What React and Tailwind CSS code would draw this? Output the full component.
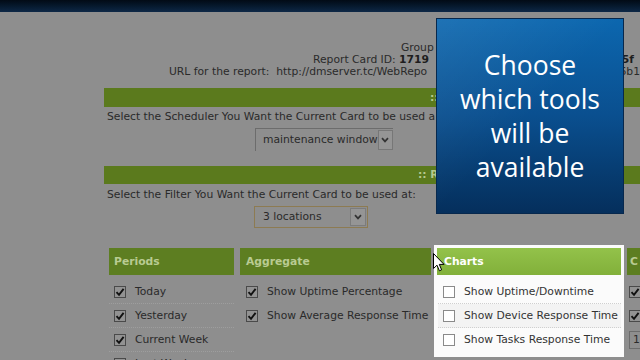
import React from "react";

function Check({ checked }) {
  if (checked) {
    return (
      <div className="w-[12px] h-[12px] shrink-0 border border-[#4a4a4a] bg-[#929292] flex items-center justify-center">
        <svg width="10" height="10" viewBox="0 0 10 10">
          <path d="M1.5 5.2 L4 7.8 L8.6 1.8" fill="none" stroke="#111" strokeWidth="1.9" />
        </svg>
      </div>
    );
  }
  return <div className="w-[12px] h-[12px] shrink-0 border border-[#8a8a8a] bg-white" />;
}

function Row({ checked, label, light, last, alt }) {
  return (
    <div
      className={
        "h-[24px] flex items-center gap-[9px] pl-[5px] whitespace-nowrap " +
        (last ? "" : light ? "border-b border-dotted border-[#cfcfcf] " : "border-b border-dotted border-[#9e9e9e] ") +
        (alt ? "bg-[#f3f3f3]" : "")
      }
    >
      <Check checked={checked} />
      <span>{label}</span>
    </div>
  );
}

function Chevron() {
  return (
    <svg width="8" height="6" viewBox="0 0 8 6">
      <path d="M1 1.2 L4 4.4 L7 1.2" fill="none" stroke="#333" strokeWidth="1.7" />
    </svg>
  );
}

export default function App() {
  return (
    <div className="relative w-[640px] h-[360px] overflow-hidden bg-[#8e8e8e] text-[#2a2a2a] font-['DejaVu_Sans',sans-serif]">
      <div className="h-[12px] bg-gradient-to-b from-[#020b16] to-[#0e2847]" />

      <div className="ml-[104px] w-[600px] text-[10.75px] leading-[12px]">
        <div className="h-[30px]" />
        <div className="pl-[297px] whitespace-nowrap">Group Name</div>
        <div className="flex w-[530px] whitespace-nowrap">
          <span className="pl-[209px]">
            Report Card ID: <b className="font-bold text-[#1e1e1e]">1719</b>
          </span>
          <span className="ml-auto font-bold text-[#1e1e1e]">5f</span>
        </div>
        <div className="flex w-[536px] whitespace-nowrap overflow-hidden">
          <span className="pl-[65px]">URL for the report:&nbsp; http://dmserver.tc/WebRepo</span>
          <span className="ml-auto">6b1</span>
        </div>

        <div className="mt-[10px] h-[19px] bg-[#5b7a1d] flex items-center pl-[326px] text-[#b6c88e] font-bold">
          ::
        </div>
        <div className="mt-[4px] pl-[3px] whitespace-nowrap">
          Select the Scheduler You Want the Current Card to be used a
        </div>
        <div className="mt-[5px] ml-[151px] w-[138px] h-[23px] flex border-l border-t border-[#6c6c6c] whitespace-nowrap">
          <div className="flex-1 flex items-center pl-[7px] text-[#2a2a2a]">maintenance window</div>
          <div className="w-[15px] shrink-0 my-[1px] mr-[1px] border border-[#777] bg-[#959595] flex items-center justify-center">
            <Chevron />
          </div>
        </div>

        <div className="mt-[15px] h-[18px] bg-[#5b7a1d] flex items-center pl-[314px] text-[#b6c88e] font-bold whitespace-nowrap">
          :: R
        </div>
        <div className="mt-[5px] pl-[3px] whitespace-nowrap">
          Select the Filter You Want the Current Card to be used at:
        </div>
        <div className="mt-[5px] ml-[150px] w-[114px] h-[22px] flex border border-[#8d7b52] whitespace-nowrap">
          <div className="flex-1 flex items-center pl-[8px] text-[#2a2a2a]">3 locations</div>
          <div className="w-[16px] shrink-0 my-[1px] mr-[1px] border border-[#7c7c7c] bg-[#959595] flex items-center justify-center">
            <Chevron />
          </div>
        </div>

        <div className="mt-[17px] ml-[2px] flex items-start">
          <div className="w-[131px] shrink-0 px-[3px] pt-[3px]">
            <div className="h-[27px] bg-[#5d7e21] flex items-center pl-[5px] font-bold text-[#b9cb92]">Periods</div>
            <div className="mt-[5px]">
              <Row checked label="Today" />
              <Row checked label="Yesterday" />
              <Row checked label="Current Week" />
              <Row checked label="Last Week" last />
            </div>
          </div>
          <div className="w-[197px] shrink-0 px-[3px] pt-[3px]">
            <div className="h-[27px] bg-[#5d7e21] flex items-center pl-[6px] font-bold text-[#b9cb92]">Aggregate</div>
            <div className="mt-[5px]">
              <div className="pl-[1px]">
                <Row checked label="Show Uptime Percentage" last />
              </div>
              <div className="pl-[1px]">
                <Row checked label="Show Average Response Time" last />
              </div>
            </div>
          </div>
          <div className="w-[190px] shrink-0 px-[3px] pt-[3px] pb-[5px] bg-[#fbfbfb] text-[#333]">
            <div className="h-[27px] bg-gradient-to-b from-[#93c24a] to-[#82b03a] flex items-center pl-[7px] font-bold text-white">
              Charts
            </div>
            <div className="mt-[5px] pl-[1px]">
              <Row label="Show Uptime/Downtime" light />
              <Row label="Show Device Response Time" light alt />
              <Row label="Show Tasks Response Time" last />
            </div>
          </div>
          <div className="w-[60px] shrink-0 px-[3px] pt-[3px] overflow-hidden">
            <div className="h-[27px] bg-[#5d7e21] flex items-center pl-[3px] font-bold text-[#b9cb92]">C</div>
            <div className="mt-[5px]">
              <div className="h-[24px] flex items-center pl-[2px]"><Check checked /></div>
              <div className="h-[24px] flex items-center pl-[2px]"><Check checked /></div>
              <div className="h-[24px] flex items-center pl-[2px]">
                <div className="w-[30px] h-[18px] border border-[#6c6c6c] pl-[3px] flex items-center">1</div>
              </div>
            </div>
          </div>
        </div>
      </div>

      <div className="absolute left-[436px] top-[18px] w-[188px] h-[196px] border border-[#07284d] bg-gradient-to-b from-[#0c67af] via-[#0a4f8f] to-[#052f5c] overflow-hidden flex items-center justify-center">
        <div className="absolute inset-0 bg-gradient-to-br from-[#ffffff14] via-transparent to-transparent" />
        <div className="relative text-center text-white text-[26.5px] leading-[34px] font-['Open_Sans',sans-serif]">
          Choose<br />which tools<br />will be<br />available
        </div>
      </div>

      <svg className="absolute left-[433px] top-[253px]" width="12" height="19" viewBox="0 0 12 19">
        <path d="M0.5 0.5 L0.5 15.5 L4 12.2 L6.4 17.8 L8.6 16.8 L6.3 11.4 L11 11.4 Z" fill="#fff" stroke="#000" strokeWidth="1" strokeLinejoin="round" />
      </svg>
    </div>
  );
}
